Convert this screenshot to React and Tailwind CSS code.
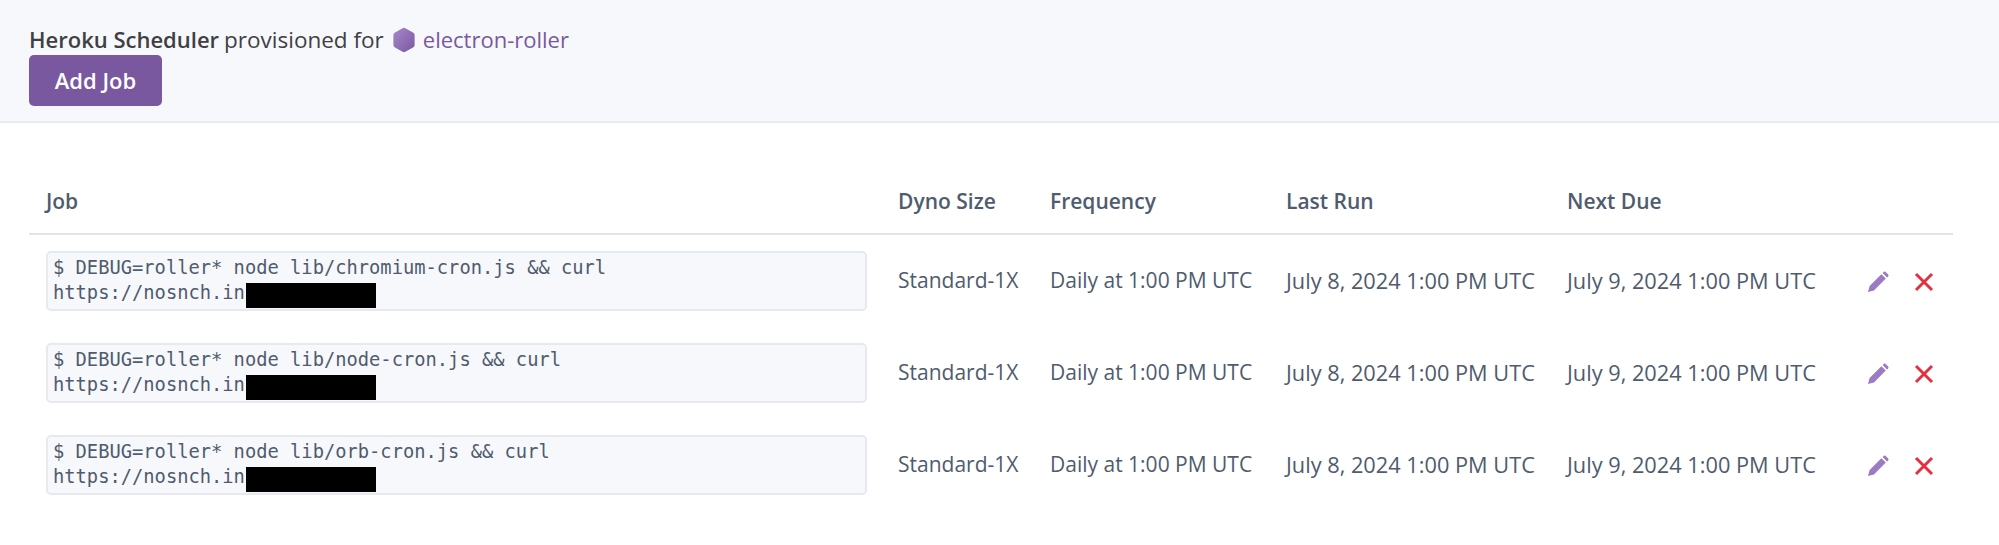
const jobs = [
  'chromium-cron.js',
  'node-cron.js',
  'orb-cron.js',
];

const columns = ['Dyno Size', 'Frequency', 'Last Run', 'Next Due'];

function AppIcon() {
  return (
    <svg width="24" height="26" viewBox="0 0 24 26" className="ml-[8px] mr-[7px] shrink-0">
      <defs>
        <linearGradient id="hex" x1="0" y1="0" x2="1" y2="1">
          <stop offset="0%" stopColor="#a888cb" />
          <stop offset="100%" stopColor="#79589f" />
        </linearGradient>
      </defs>
      <path
        d="M10.6 1.2a3 3 0 0 1 2.8 0l7.6 4.2A3 3 0 0 1 22.6 8v10a3 3 0 0 1-1.6 2.6l-7.6 4.2a3 3 0 0 1-2.8 0L3 20.6A3 3 0 0 1 1.4 18V8A3 3 0 0 1 3 5.4z"
        fill="url(#hex)"
      />
    </svg>
  );
}

function PencilIcon() {
  return (
    <svg width="22" height="22" viewBox="0 0 22 22" fill="#9b7cc4">
      <path d="M1 21l1.6-6L14.4 3.2l4.4 4.4L7 19.4z" />
      <path d="M15.6 2l1.2-1.2a1.2 1.2 0 0 1 1.6 0l2.8 2.8a1.2 1.2 0 0 1 0 1.6L20 6.4z" />
    </svg>
  );
}

function CloseIcon() {
  return (
    <svg width="20" height="20" viewBox="0 0 20 20" fill="none" stroke="#e3303f" strokeWidth="3">
      <path d="M2 2l16 16M18 2L2 18" />
    </svg>
  );
}

function JobRow({ file }) {
  return (
    <tr>
      <td className="pl-[17px] pr-[14px] py-4">
        <div className="h-[60px] rounded-[5px] border-2 border-[#e6e9f0] bg-[#f7f8fb] px-[5px] pt-[2px] font-['DejaVu_Sans_Mono',monospace] text-[18.75px] leading-[25px] text-[#4f5b6e]">
          <div>$ DEBUG=roller* node lib/{file} &amp;&amp; curl</div>
          <div className="flex">
            https://nosnch.in
            <span className="ml-[1px] mt-[3px] h-[25px] w-[130px] bg-black" />
          </div>
        </div>
      </td>
      <td className="pl-[17px]">Standard-1X</td>
      <td className="pl-[17px]">Daily at 1:00 PM UTC</td>
      <td className="pl-[17px] text-[21.75px]">July 8, 2024 1:00 PM UTC</td>
      <td className="pl-[17px] text-[21.75px]">July 9, 2024 1:00 PM UTC</td>
      <td>
        <div className="flex items-center gap-[25px] pl-[7px] pt-[1px]">
          <PencilIcon />
          <CloseIcon />
        </div>
      </td>
    </tr>
  );
}

export default function App() {
  return (
    <div className="min-h-[545px] bg-white font-['Open_Sans','Noto_Sans',sans-serif] text-[#4f5b6e]">
      <div className="h-[123px] border-b-2 border-[#e9ebf3] bg-[#f7f8fb] pl-[29px] pt-[24px]">
        <div className="flex h-[31px] items-center text-[22px] text-[#3f3f44]">
          <span className="font-semibold">Heroku Scheduler</span>
          <span className="ml-[5px] text-[22.5px]">provisioned for</span>
          <AppIcon />
          <span className="text-[#79589f]">electron-roller</span>
        </div>
        <button className="h-[51px] w-[133px] rounded-[5px] bg-[#79589f] text-[22px] font-semibold text-white">
          Add Job
        </button>
      </div>
      <div className="pl-[29px] pr-[46px] pt-[54px]">
        <table className="w-[1924px] table-fixed border-collapse text-[21px]">
          <colgroup>
            <col className="w-[852px]" />
            <col className="w-[152px]" />
            <col className="w-[236px]" />
            <col className="w-[281px]" />
            <col className="w-[310px]" />
            <col className="w-[93px]" />
          </colgroup>
          <thead>
            <tr className="h-[57px] border-b-2 border-[#dfe4ef] text-left">
              <th className="pl-[17px] pb-[6px] font-semibold">Job</th>
              {columns.map((name) => (
                <th key={name} className="pl-[17px] pb-[6px] font-semibold">
                  {name}
                </th>
              ))}
              <th />
            </tr>
          </thead>
          <tbody>
            {jobs.map((file) => (
              <JobRow key={file} file={file} />
            ))}
          </tbody>
        </table>
      </div>
    </div>
  );
}
